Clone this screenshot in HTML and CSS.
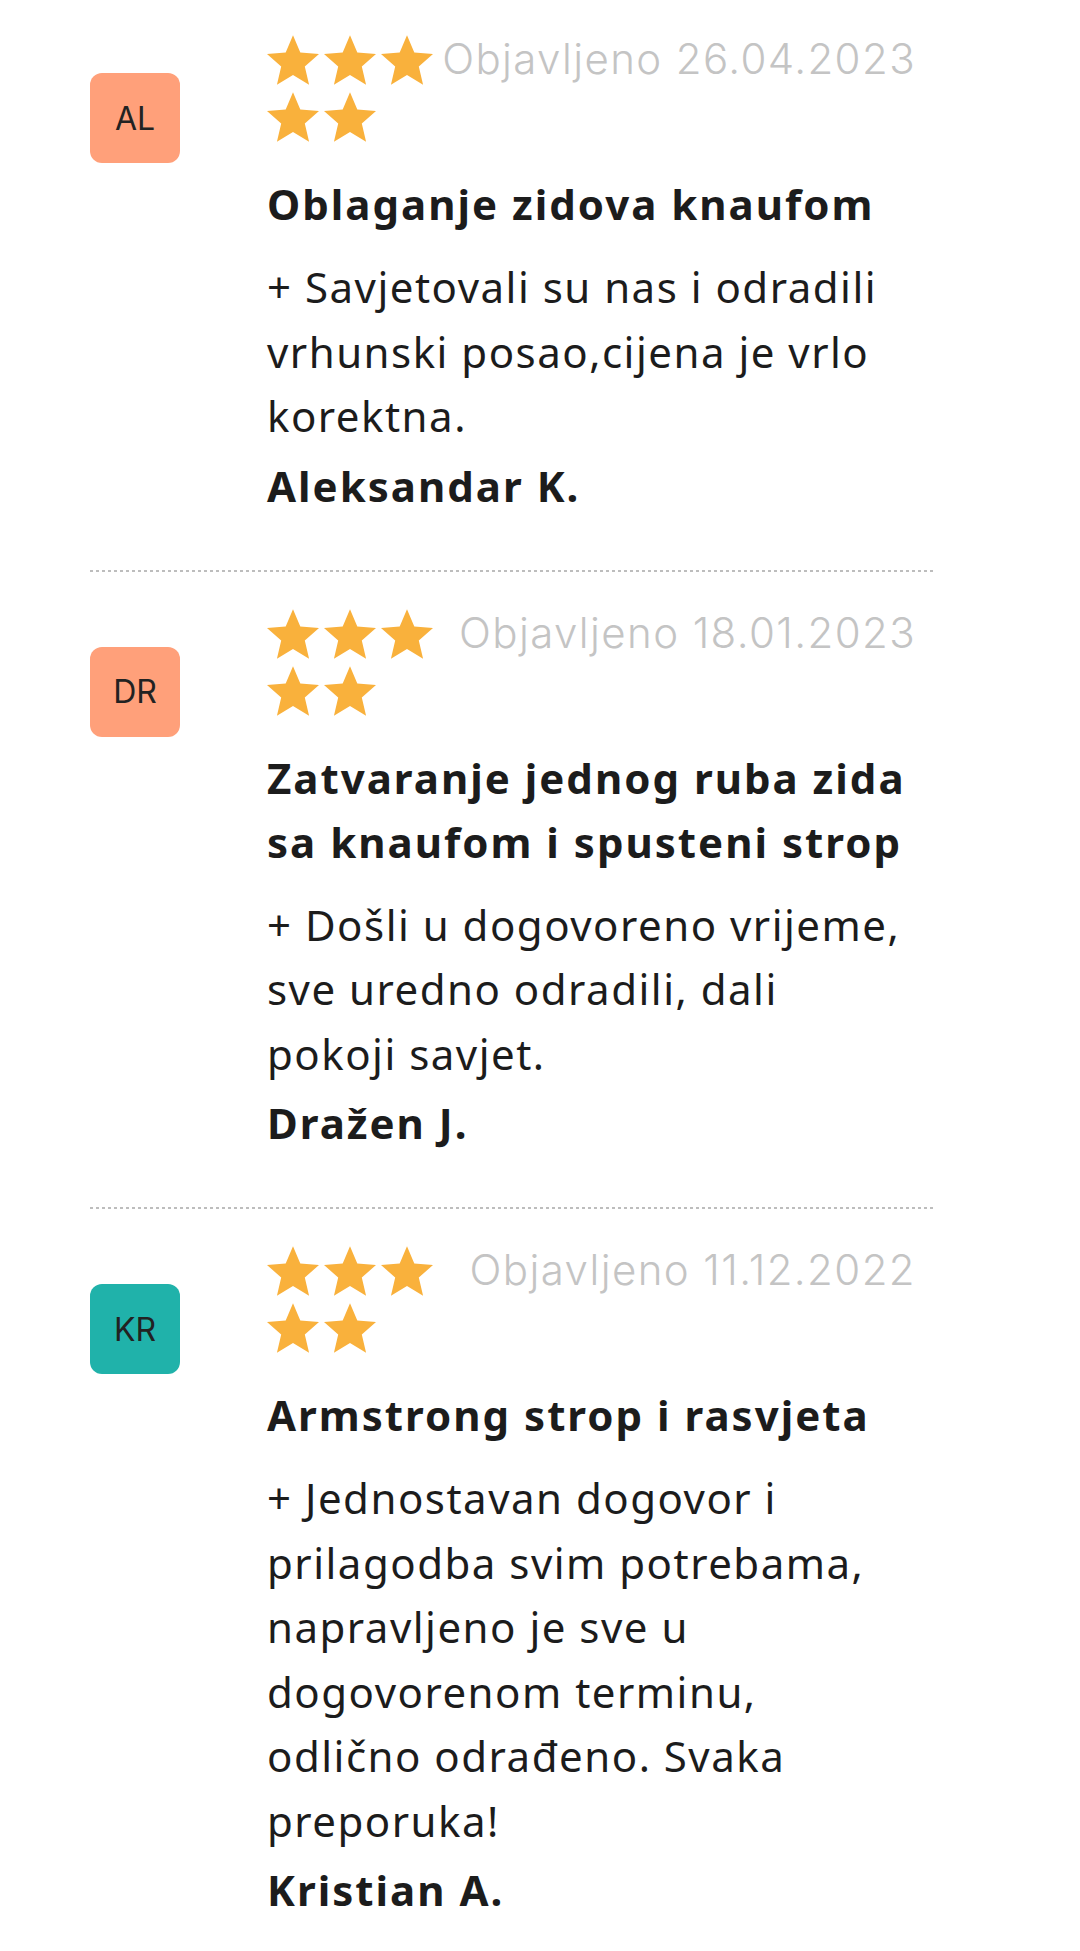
FILE: index.html
```html
<!DOCTYPE html>
<html lang="hr">
<head>
<meta charset="utf-8">
<title>Recenzije</title>
<link rel="stylesheet" href="styles.css">
</head>
<body>
<svg class="defs" width="0" height="0" aria-hidden="true">
  <defs>
    <symbol id="star" viewBox="2 2 20 19">
      <path d="M12 17.27L18.18 21l-1.64-7.03L22 9.24l-7.19-.61L12 2 9.19 8.63 2 9.24l5.46 4.73L5.82 21z"/>
    </symbol>
  </defs>
</svg>
<main class="reviews">
  <article class="review">
    <div class="avatar avatar-salmon">AL</div>
    <div class="content">
      <div class="head">
        <div class="stars">
          <svg class="star"><use href="#star"/></svg>
          <svg class="star"><use href="#star"/></svg>
          <svg class="star"><use href="#star"/></svg>
          <svg class="star"><use href="#star"/></svg>
          <svg class="star"><use href="#star"/></svg>
        </div>
        <div class="date">Objavljeno 26.04.2023</div>
      </div>
      <h3 class="title">Oblaganje zidova knaufom</h3>
      <p class="text">+ Savjetovali su nas i odradili vrhunski posao,cijena je vrlo korektna.</p>
      <p class="author">Aleksandar K.</p>
    </div>
  </article>
  <div class="sep"></div>
  <article class="review">
    <div class="avatar avatar-salmon">DR</div>
    <div class="content">
      <div class="head">
        <div class="stars">
          <svg class="star"><use href="#star"/></svg>
          <svg class="star"><use href="#star"/></svg>
          <svg class="star"><use href="#star"/></svg>
          <svg class="star"><use href="#star"/></svg>
          <svg class="star"><use href="#star"/></svg>
        </div>
        <div class="date">Objavljeno 18.01.2023</div>
      </div>
      <h3 class="title">Zatvaranje jednog ruba zida sa knaufom i spusteni strop</h3>
      <p class="text">+ Došli u dogovoreno vrijeme, sve uredno odradili, dali pokoji savjet.</p>
      <p class="author">Dražen J.</p>
    </div>
  </article>
  <div class="sep"></div>
  <article class="review">
    <div class="avatar avatar-teal">KR</div>
    <div class="content">
      <div class="head">
        <div class="stars">
          <svg class="star"><use href="#star"/></svg>
          <svg class="star"><use href="#star"/></svg>
          <svg class="star"><use href="#star"/></svg>
          <svg class="star"><use href="#star"/></svg>
          <svg class="star"><use href="#star"/></svg>
        </div>
        <div class="date">Objavljeno 11.12.2022</div>
      </div>
      <h3 class="title">Armstrong strop i rasvjeta</h3>
      <p class="text">+ Jednostavan dogovor i prilagodba svim potrebama, napravljeno je sve u dogovorenom terminu, odlično odrađeno. Svaka preporuka!</p>
      <p class="author">Kristian A.</p>
    </div>
  </article>
</main>
</body>
</html>
```

FILE: styles.css
```css
html, body {
  margin: 0;
  padding: 0;
  background: #ffffff;
}

body {
  font-family: "Noto Sans", "Open Sans", sans-serif;
  color: #1c1c1c;
}

.defs {
  position: absolute;
  width: 0;
  height: 0;
  overflow: hidden;
}

.reviews {
  padding: 35px 144px 0 90px;
}

.review {
  display: flex;
  align-items: flex-start;
  padding-bottom: 52px;
}

.sep {
  height: 2px;
  background: repeating-linear-gradient(to right, #bdbdbd 0 3px, transparent 3px 6px);
  margin-bottom: 37px;
}

.avatar {
  flex: 0 0 90px;
  width: 90px;
  height: 90px;
  margin-top: 38px;
  margin-right: 87px;
  border-radius: 12px;
  display: flex;
  align-items: center;
  justify-content: center;
  font-family: "Inter", "Lato", sans-serif;
  font-weight: 400;
  font-size: 32px;
  color: #222222;
}

.avatar-salmon {
  background: #ffa07a;
}

.avatar-teal {
  background: #20b2aa;
}

.content {
  flex: 1;
  min-width: 0;
  padding-right: 20px;
}

.head {
  display: flex;
  justify-content: space-between;
  align-items: flex-start;
}

.stars {
  width: 171px;
  display: flex;
  flex-wrap: wrap;
  column-gap: 5px;
  row-gap: 7px;
}

.star {
  width: 52px;
  height: 50px;
  fill: #f9b13c;
}

.date {
  font-family: "Inter", "Lato", sans-serif;
  font-weight: 300;
  font-size: 42px;
  line-height: 1;
  letter-spacing: 1.4px;
  color: #c4c4c4;
  white-space: nowrap;
  margin-top: 3px;
}

.title {
  margin: 30px 0 0;
  font-size: 42px;
  font-weight: 700;
  line-height: 64px;
  letter-spacing: 2px;
  color: #1c1c1c;
}

.text {
  margin: 19px 0 0;
  font-size: 42px;
  font-weight: 400;
  line-height: 64.5px;
  letter-spacing: 1.5px;
}

.author {
  margin: 5px 0 0;
  font-size: 42px;
  font-weight: 700;
  line-height: 64px;
  letter-spacing: 2px;
}
```
